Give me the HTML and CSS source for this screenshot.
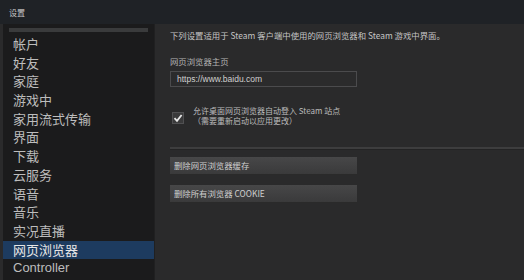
FILE: index.html
```html
<!DOCTYPE html>
<html>
<head>
<meta charset="utf-8">
<link rel="stylesheet" href="styles.css">
</head>
<body>
<div class="window">
  <div class="titlebar">设置</div>
  <div class="main">
    <div class="sidebar">
      <div class="scrolltop"></div>
      <div class="item">帐户</div>
      <div class="item">好友</div>
      <div class="item">家庭</div>
      <div class="item">游戏中</div>
      <div class="item">家用流式传输</div>
      <div class="item">界面</div>
      <div class="item">下载</div>
      <div class="item">云服务</div>
      <div class="item">语音</div>
      <div class="item">音乐</div>
      <div class="item">实况直播</div>
      <div class="item selected">网页浏览器</div>
      <div class="item latin">Controller</div>
    </div>
    <div class="panel">
      <div class="intro">下列设置适用于 Steam 客户端中使用的网页浏览器和 Steam 游戏中界面。</div>
      <div class="label">网页浏览器主页</div>
      <div class="input">https://www.baidu.com</div>
      <div class="check-row">
        <div class="checkbox">
          <svg width="10" height="10" viewBox="0 0 10 10"><path d="M1.5 5.2 L4 7.8 L8.6 2" fill="none" stroke="#e8e8e8" stroke-width="1.8"/></svg>
        </div>
        <div class="check-text">
          <div>允许桌面网页浏览器自动登入 Steam 站点</div>
          <div>（需要重新启动以应用更改）</div>
        </div>
      </div>
      <div class="separator"></div>
      <div class="button">删除网页浏览器缓存</div>
      <div class="button">删除所有浏览器 COOKIE</div>
    </div>
  </div>
</div>
</body>
</html>
```
FILE: styles.css
```css
html, body {
  margin: 0;
  padding: 0;
  background: #2a2a2b;
}
.window {
  width: 524px;
  height: 280px;
  overflow: hidden;
  display: flex;
  flex-direction: column;
  font-family: "Noto Sans CJK SC", "Liberation Sans", sans-serif;
  background: #2a2a2b;
}
.titlebar {
  height: 24px;
  flex: none;
  background: #1f2226;
  color: #c8c8c8;
  font-size: 8px;
  line-height: 25px;
  padding-left: 9px;
  box-sizing: border-box;
}
.main {
  flex: 1;
  display: flex;
  background: #2a2a2b;
}
.sidebar {
  width: 152px;
  margin-left: 3px;
  flex: none;
  background: #1b1b1c;
  padding-top: 4px;
  box-sizing: border-box;
  border-right: 1px solid #202021;
}
.scrolltop {
  height: 4px;
  margin: 0 6px 3px 6px;
  background: #3a3b3c;
}
.item {
  height: 18.7px;
  line-height: 18.7px;
  font-size: 13px;
  color: #bdbdbd;
  padding-left: 10px;
  white-space: nowrap;
}
.item.selected {
  background: #1d3b5f;
  color: #e6e6e6;
}
.item.latin {
  font-family: "Liberation Sans", sans-serif;
}
.panel {
  flex: 1;
  padding-left: 15px;
  padding-top: 4px;
  color: #bcbcbc;
  font-size: 8.4px;
}
.intro {
  height: 14px;
  line-height: 14px;
  color: #c4c4c4;
}
.label {
  margin-top: 13px;
  line-height: 12px;
  color: #b4b4b4;
}
.input {
  margin-top: 4px;
  width: 187px;
  height: 16px;
  box-sizing: border-box;
  border: 1px solid #4b4b4d;
  background: #2b2b2c;
  color: #d0d0d0;
  font-family: "Liberation Sans", sans-serif;
  font-size: 8.5px;
  line-height: 14px;
  padding-left: 6px;
}
.check-row {
  display: flex;
  margin-top: 19px;
  align-items: flex-start;
}
.checkbox {
  width: 12px;
  height: 12px;
  margin-top: 6px;
  margin-left: 2px;
  background: #3a3a3b;
  border: 1px solid #505052;
  box-sizing: border-box;
  display: flex;
  align-items: center;
  justify-content: center;
}
.checkbox svg {
  display: block;
}
.check-text {
  margin-left: 9px;
  font-size: 8px;
  line-height: 10px;
  color: #bcbcbc;
}
.separator {
  margin-top: 21px;
  height: 2px;
  background: #3d3d3e;
  border-bottom: 1px solid #232324;
}
.button {
  width: 187px;
  height: 18px;
  box-sizing: border-box;
  background: linear-gradient(#474748, #3a3a3b);
  border-bottom: 1px solid #2a2a2a;
  color: #cfcfcf;
  line-height: 17px;
  padding-left: 4px;
  margin-top: 7px;
}
.button + .button {
  margin-top: 10px;
}
```
